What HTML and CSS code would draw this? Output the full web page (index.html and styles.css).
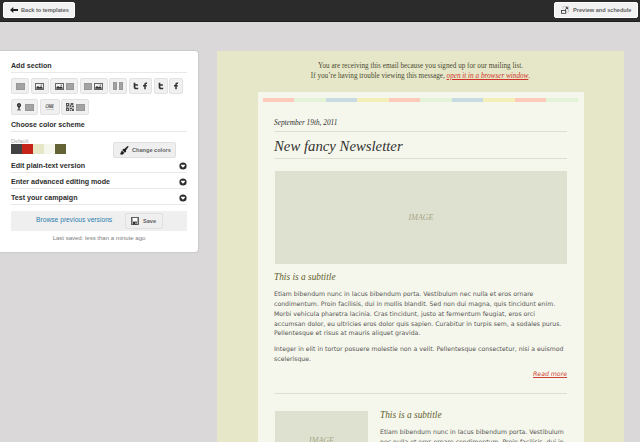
FILE: index.html
```
<!DOCTYPE html>
<html lang="en">
<head>
<meta charset="utf-8">
<title>Newsletter editor</title>
<link rel="stylesheet" href="styles.css">
</head>
<body>
<svg width="0" height="0" class="defs">
  <symbol id="pic" viewBox="0 0 9 7"><rect x=".5" y=".5" width="8" height="6" fill="#eee" stroke="#666"/><path d="M1.300 5.700V4.500L3 3l1.500 1.200L6 3.300l1.700 1.400v1z" fill="#333"/><circle cx="6.300" cy="2.200" r=".6" fill="#444"/></symbol>
  <symbol id="tw" viewBox="0 0 6 8"><path d="M1.500 .8v4q0 1.700 1.700 1.700h2M1.500 3h3.400" fill="none" stroke="#333" stroke-width="1.700"/></symbol>
  <symbol id="fb" viewBox="0 0 6 8"><path d="M5 1.200H4q-1 0-1 1.100v5M1 3.700h3.700" fill="none" stroke="#333" stroke-width="1.500"/></symbol>
  <symbol id="down" viewBox="0 0 8 8"><circle cx="4" cy="4" r="3.600" fill="#2c2c2c"/><path d="M2.100 2.800h3.800v1L4 5.800l-1.900-2z" fill="#fff"/></symbol>
</svg>
<header class="topbar">
  <a class="btn back"><svg width="8" height="6" viewBox="0 0 8 6"><path d="M0 3l3.300-3v2H8v2H3.300v2z" fill="#222"/></svg><span>Back to templates</span></a>
  <a class="btn preview"><svg width="8" height="8" viewBox="0 0 8 8"><path d="M2 3V.5h5.500V6H5" fill="none" stroke="#bbb" stroke-width=".7"/><rect x=".5" y="4.500" width="4.200" height="2.800" fill="#fff" stroke="#444" stroke-width=".9"/><path d="M4 3.800L6 1.900M4.800 1.500h1.700v1.700" fill="none" stroke="#333" stroke-width=".9"/></svg><span>Preview and schedule</span></a>
</header>
<div class="workspace">
  <aside class="panel">
    <h2><span>Add section</span></h2>
    <div class="tools">
      <a class="tool w18"><i class="block"></i></a>
      <a class="tool w18"><svg width="9" height="7"><use href="#pic"/></svg></a>
      <a class="tool w28"><svg width="9" height="7"><use href="#pic"/></svg><i class="block s"></i></a>
      <a class="tool w28 tight"><i class="block s"></i><svg width="9" height="7"><use href="#pic"/></svg></a>
      <a class="tool w18"><i class="block col"></i><i class="block col"></i></a>
      <a class="tool w23 social"><svg width="6" height="8"><use href="#tw"/></svg><svg width="6" height="8"><use href="#fb"/></svg></a>
      <a class="tool w14"><svg width="6" height="8"><use href="#tw"/></svg></a>
      <a class="tool w14"><svg width="6" height="8"><use href="#fb"/></svg></a>
    </div>
    <div class="tools">
      <a class="tool w27 pin"><svg width="6" height="8" viewBox="0 0 6 8"><path d="M1 7h4" stroke="#777"/><path d="M3 0a2.200 2.200 0 0 1 .8 4.200L3.400 7h-.8l-.4-2.800A2.200 2.200 0 0 1 3 0z" fill="#2c2c2c"/><circle cx="3" cy="2.200" r=".6" fill="#bbb"/></svg><i class="block m"></i></a>
      <a class="tool w20"><span class="line">LINE</span></a>
      <a class="tool w28"><svg width="8" height="8" viewBox="0 0 8 8"><path d="M0 0h8v8H0z" fill="#bbb"/><path d="M0 0h3v3H0zM5 0h2v2H5zM4 2h1v2H4zM6 3h2v1H6zM0 5h3v3H0zM4 5h2v1H4zM6 6h2v2H6zM4 7h1v1H4zM0 3.500h2v1H0z" fill="#555"/><path d="M1 1h1v1H1zM1 6h1v1H1z" fill="#ddd"/></svg><i class="block m"></i></a>
    </div>
    <h2 class="scheme-title"><span>Choose color scheme</span></h2>
    <div class="scheme">
      <div><div class="name">Default</div><div class="swatches"><i class="c1"></i><i class="c2"></i><i class="c3"></i><i class="c4"></i><i class="c5"></i></div></div>
      <a class="btn change"><svg width="9" height="9" viewBox="0 0 9 9"><path d="M8.700 .4L7.600 0 4.300 3 3.500 2.700 2.200 4l2.700 2.700L6.200 5.400 5.900 4.600zM1.800 4.500l2.600 2.600-2 1.600L0 8.300z" fill="#222"/></svg><span>Change colors</span></a>
    </div>
    <h2 class="fold"><span>Edit plain-text version</span><svg width="8" height="8"><use href="#down"/></svg></h2>
    <h2 class="fold"><span>Enter advanced editing mode</span><svg width="8" height="8"><use href="#down"/></svg></h2>
    <h2 class="fold"><span>Test your campaign</span><svg width="8" height="8"><use href="#down"/></svg></h2>
    <div class="savebar">
      <a class="browse">Browse previous versions</a>
      <a class="btn save"><svg width="8" height="8" viewBox="0 0 8 8"><rect x=".5" y=".5" width="7" height="7" fill="#aaa" stroke="#555" stroke-width=".9"/><path d="M2 1h4v3H2z" fill="#fff"/><path d="M2 5h4v2.500H2z" fill="#333"/><path d="M4.500 5.500h1V7h-1z" fill="#fff"/></svg><span>Save</span></a>
    </div>
    <p class="saved">Last saved: less than a minute ago</p>
  </aside>
  <main class="email">
    <div class="notice"><span>You are receiving this email because you signed up for our mailing list.</span><br><span>If you’re having trouble viewing this message, <a>open it in a browser window</a>.</span></div>
    <article class="card">
      <div class="stripe"></div>
      <div class="content">
        <div class="date">September 19th, 2011</div>
        <h1>New fancy Newsletter</h1>
        <div class="image">IMAGE</div>
        <h3>This is a subtitle</h3>
        <p>Etiam bibendum nunc in lacus bibendum porta. Vestibulum nec nulla et eros ornare<br>condimentum. Proin facilisis, dui in mollis blandit. Sed non dui magna, quis tincidunt enim.<br>Morbi vehicula pharetra lacinia. Cras tincidunt, justo at fermentum feugiat, eros orci<br>accumsan dolor, eu ultricies eros dolor quis sapien. Curabitur in turpis sem, a sodales purus.<br>Pellentesque et risus at mauris aliquet gravida.</p>
        <p>Integer in elit in tortor posuere molestie non a velit. Pellentesque consectetur, nisi a euismod<br>scelerisque.</p>
        <a class="more">Read more</a>
        <section class="split">
          <div class="image small">IMAGE</div>
          <div><h3>This is a subtitle</h3>
          <p>Etiam bibendum nunc in lacus bibendum porta. Vestibulum<br>nec nulla et eros ornare condimentum. Proin facilisis, dui in</p></div>
        </section>
      </div>
    </article>
  </main>
</div>
</body>
</html>
```
FILE: styles.css
```
* { box-sizing: border-box; }
html, body { height: 442px; overflow: hidden; }
body { margin: 0; background: #dad8d9; font-family: "Liberation Sans", Arial, sans-serif; }
svg { display: block; flex: none; }
.defs { position: absolute; }
span, a, p, h1, h2, h3 { white-space: nowrap; }
.topbar { height: 22px; background: #2b2b2b; border-bottom: 1px solid #1d1d1d; display: flex; justify-content: space-between; padding: 2px 2px 0 3px; }
.btn { display: flex; align-items: center; height: 16px; background: #efefef; border: 1px solid #e0e0e0; border-radius: 2px; font-weight: bold; font-size: 5.600px; color: #626262; }
.topbar .btn { background: #f2f2f2; border-color: #fff; }
.back { width: 72px; padding-left: 6px; gap: 3px; }
.preview { width: 84px; padding-left: 6px; gap: 4px; }
.workspace { display: flex; align-items: flex-start; padding-top: 29px; gap: 19px; height: 420px; overflow: hidden; }
.panel { width: 198px; height: 201px; flex: none; background: #fff; border-radius: 0 3px 3px 0; box-shadow: 0 0 2px #aaa; padding: 9px 11px 0; }
h2 { margin: 0; height: 13px; border-bottom: 1px solid #e8e8e8; font-size: 7.100px; line-height: 13px; color: #2e2e2e; display: flex; justify-content: space-between; }
.tools { display: flex; gap: 1.600px; margin-top: 5px; }
.tool { height: 16px; display: flex; align-items: center; justify-content: center; gap: 2px; background: #f0f0f0; border: 1px solid #e2e2e2; border-radius: 2px; flex: none; }
.w14 { width: 14px; } .w18 { width: 18px; } .w20 { width: 20px; } .w23 { width: 23px; } .w27 { width: 27px; } .w28 { width: 28px; }
.social { gap: 3px; }
.block { width: 9px; height: 7px; background: #a3a3a3; border: 1px solid #979797; flex: none; }
.block.s { width: 8px; }
.block.col { width: 4px; height: 8px; }
.block.m { width: 9px; }
.pin { gap: 3px; }
.line { font-size: 3.500px; line-height: 4px; font-weight: bold; color: #444; border-top: 1px solid #aaa; border-bottom: 1px solid #ccc; }
.scheme-title { margin-top: 4px; }
.scheme { height: 28px; display: flex; justify-content: space-between; padding: 6px 11px 0 0; }
.scheme .btn { margin-top: 4px; }
.name { font-size: 5.500px; line-height: 6px; color: #aaa; }
.swatches { display: flex; }
.swatches i { width: 11px; height: 10px; }
.c1 { background: #424242; } .c2 { background: #c62319; } .c3 { background: #e6e7c6; } .c4 { background: #f6f7ec; } .c5 { background: #646336; }
.change { width: 63px; padding-left: 6px; gap: 3px; }
.fold { margin-bottom: 3px; }
.fold svg { margin-top: 2px; }
.savebar { display: flex; height: 20px; background: #efefef; margin-top: 6px; align-items: center; }
.browse { width: 114px; padding-left: 25px; color: #2d7cae; font-size: 6.700px; line-height: 18px; height: 20px; }
.save { width: 38px; padding-left: 5px; gap: 4px; }
.email { width: 407px; height: 391px; overflow: hidden; background: #e6e7c8; }
.notice { height: 41px; padding-top: 10px; text-align: center; font-family: "Liberation Serif", Georgia, serif; font-size: 7.200px; line-height: 10px; color: #4c4c34; }
.notice a { color: #cf3529; font-style: italic; text-decoration: underline; }
.card { width: 326px; height: 350px; margin-left: 41px; background: #f6f7ec; padding-top: 6px; }
.stripe { width: 315px; height: 4px; margin-left: 5px; background: linear-gradient(90deg, #fcc9bb 10%, #e3f3d7 10% 20%, #c9dbe2 20% 30%, #f4efb9 30% 40%, #fcc9bb 40% 50%, #e3f3d7 50% 60%, #c9dbe2 60% 70%, #f4efb9 70% 80%, #fcc9bb 80% 90%, #e3f3d7 90%); }
.content { padding: 15px 17px 0 16px; }
.date { font: italic 7.300px/12px "Liberation Serif", Georgia, serif; height: 15px; border-bottom: 1px solid #dedfd3; color: #333; }
h1 { margin: 0; height: 27px; border-bottom: 1px solid #dedfd3; font: italic 14.750px/28px "Liberation Serif", Georgia, serif; color: #333; }
.image { height: 93px; margin: 12px 0 0 1px; background: #dfe1d0; display: flex; align-items: center; justify-content: center; font: italic 8px "Liberation Serif", Georgia, serif; color: #a5a686; }
h3 { margin: 8px 0 6px; font: italic 9.350px/11px "Liberation Serif", Georgia, serif; color: #5f6130; }
p { margin: 0 0 5.500px; font-family: "DejaVu Sans", Verdana, sans-serif; font-size: 6.200px; line-height: 9.850px; color: #555; }
.panel .saved { margin: 3px 0 0; text-align: center; font-family: "Liberation Sans", Arial, sans-serif; font-size: 6px; line-height: 8px; color: #7d7d7d; }
.more { display: block; text-align: right; font: italic 6.200px/10px "DejaVu Sans", Verdana, sans-serif; color: #cf3f35; text-decoration: underline; }
.split { margin-top: 14px; border-top: 1px solid #dedfd3; padding-top: 17px; display: flex; gap: 12px; }
.split .image { width: 93px; height: 60px; margin-top: 0; flex: none; }
.split h3 { margin-top: -1px; }
```
